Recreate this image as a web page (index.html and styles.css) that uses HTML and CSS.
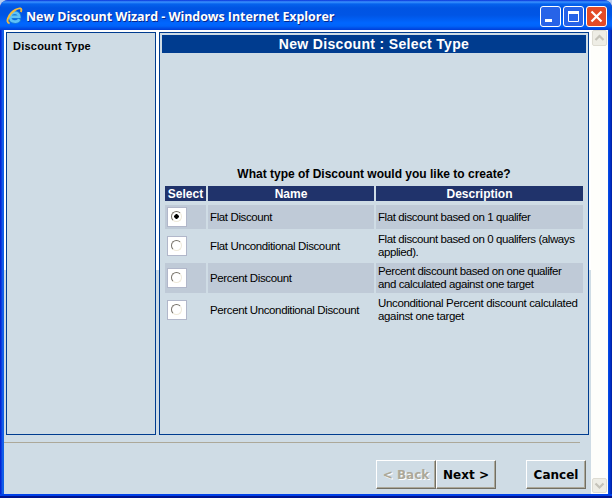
FILE: index.html
```html
<!DOCTYPE html>
<html lang="en">
<head>
<meta charset="utf-8">
<title>New Discount Wizard</title>
<link rel="stylesheet" href="styles.css">
</head>
<body>
<div class="window">
  <header class="titlebar">
    <svg class="logo" width="17" height="18" viewBox="0 0 17 18">
      <path d="M13.4 12.2C11.6 16 4.4 15.8 4.2 10.2C4.1 4.6 13.2 4.2 13.2 9.7H5" fill="none" stroke="#1b7fd6" stroke-width="4"/>
      <path d="M13.2 12.2C11.6 15.8 4.4 15.6 4.2 10.2C4.1 4.6 13.2 4.2 13.2 9.7H5" fill="none" stroke="#5fc2f8" stroke-width="2.6"/>
      <path d="M3.6 16.2C-1.4 15.6 3.2 6.4 9.3 2.9C13.6.4 16.8.8 14.8 5" fill="none" stroke="#f3bb3d" stroke-width="1.9"/>
    </svg>
    <h1 class="title">New Discount Wizard - Windows Internet Explorer</h1>
    <div class="controls">
      <svg width="21" height="21" viewBox="0 0 21 21"><rect class="ctl" x=".5" y=".5" width="20" height="20" rx="2.5"/><path d="M5 14.5h7" stroke="#fff" stroke-width="3"/></svg>
      <svg width="21" height="21" viewBox="0 0 21 21"><rect class="ctl" x=".5" y=".5" width="20" height="20" rx="2.5"/><path d="M5.5 6v9.5h10V6" fill="none" stroke="#fff"/><path d="M5 6.5h11" stroke="#fff" stroke-width="3"/></svg>
      <svg width="21" height="21" viewBox="0 0 21 21"><rect class="ctl close" x=".5" y=".5" width="20" height="20" rx="2.5"/><path d="M5.5 5.5l10 10M15.5 5.5l-10 10" stroke="#fff" stroke-width="2.2"/></svg>
    </div>
  </header>
  <div class="viewport">
    <main class="page">
      <div class="panels">
        <aside class="steps">Discount Type</aside>
        <section class="content">
          <h2 class="heading">New Discount : Select Type</h2>
          <p class="question">What type of Discount would you like to create?</p>
          <div class="grid">
            <div class="th">Select</div><div class="th">Name</div><div class="th">Description</div>
            <div class="gap"></div>
            <div class="td odd"><i class="box"><b class="radio on"></b></i></div><div class="td name odd">Flat Discount</div><div class="td odd">Flat discount based on 1 qualifer</div>
            <div class="td"><i class="box"><b class="radio"></b></i></div><div class="td name">Flat Unconditional Discount</div><div class="td"><p>Flat discount based on 0 qualifers (always<br>applied).</p></div>
            <div class="td odd"><i class="box"><b class="radio"></b></i></div><div class="td name odd">Percent Discount</div><div class="td odd"><p>Percent discount based on one qualifer<br>and calculated against one target</p></div>
            <div class="td"><i class="box"><b class="radio"></b></i></div><div class="td name">Percent Unconditional Discount</div><div class="td"><p class="wide">Unconditional Percent discount calculated<br>against one target</p></div>
          </div>
        </section>
      </div>
      <hr class="rule">
      <div class="buttons">
        <button class="btn" disabled>&lt; Back</button><button class="btn">Next &gt;</button><button class="btn cancel">Cancel</button>
      </div>
    </main>
    <div class="scrollbar">
      <svg width="15" height="17" viewBox="0 0 15 17"><rect class="arrow" x=".5" y=".5" width="14" height="15" rx="1.5"/><path d="M3.5 10l4-4 4 4" fill="none" stroke="#c5c3b9" stroke-width="2.2"/></svg>
      <svg width="15" height="17" viewBox="0 0 15 17"><rect class="arrow" x=".5" y="1.5" width="14" height="14" rx="1.5"/><path d="M3.5 6.5l4 4 4-4" fill="none" stroke="#c5c3b9" stroke-width="2.2"/></svg>
    </div>
  </div>
</div>
</body>
</html>
```
FILE: styles.css
```css
* { box-sizing: border-box; }
body { margin: 0; background: #b8cdf0; font-family: "Liberation Sans", Arial, sans-serif; }
h1, h2, p { margin: 0; }
.window { width: 612px; height: 498px; padding: 0 4px 4px; border-radius: 8px 8px 0 0; background: linear-gradient(90deg, #0019cf 0, #0831d9 1px, #166aee 3px, #0855dd 4px, #0855dd 608px, #0040e8 609px, #001ea0 612px); overflow: hidden; display: flex; flex-direction: column; box-shadow: inset 0 -2px #00138c, inset 0 -4px #0040e8; }
.titlebar { flex: none; height: 30px; margin: 0 -4px; padding: 0 5px 0 6px; display: flex; align-items: center; border-radius: 8px 8px 0 0; background: linear-gradient(#0831d9 0, #3a93ff 2px, #0562ed 4px, #0054e3 8px, #0055e5 15px, #0066ff 23px, #0064fa 26px, #003dd7 30px); }
.logo { flex: none; margin: 2px 3px 0 0; }
.title { flex: 1; font: bold 12.5px/20px "Open Sans", sans-serif; color: #fff; text-shadow: 1px 1px #07298d; white-space: nowrap; padding-top: 4px; letter-spacing: -.06px; }
.controls { display: flex; gap: 2px; padding-top: 3px; }
.ctl { fill: #2763e8; stroke: #fff; }
.close { fill: #e34b27; }
.viewport { flex: 1; display: flex; background: #cfdce5; }
.page { width: 587px; display: flex; flex-direction: column; }
.panels { height: 407px; padding: 2px 2px 2px; display: flex; gap: 3px; background: linear-gradient(#fff 240px, #cfdce5 240px); }
.steps, .content { height: 403px; border: 1px solid #003c8f; background: #cfdce5; }
.steps { width: 150px; padding: 6px; font-weight: bold; font-size: 11px; line-height: 15px; letter-spacing: .23px; }
.content { width: 430px; padding: 2px; }
.heading { height: 18px; background: #003c8f; color: #fff; font-size: 14px; line-height: 18px; text-align: center; letter-spacing: .33px; }
.question { margin-top: 113px; height: 20px; text-align: center; font-weight: bold; font-size: 12px; line-height: 17px; }
.grid { margin: 0 3px; display: grid; grid-template-columns: 41px 166px 207px; column-gap: 2px; grid-template-rows: 15px 4px 24px 34px 30px 34px; }
.gap { grid-column: 1 / -1; }
.th { background: #20336b; color: #fff; font-size: 12px; font-weight: bold; line-height: 16px; text-align: center; }
.td { display: flex; align-items: center; padding-left: 2px; font-size: 11.5px; line-height: 13px; letter-spacing: -.42px; white-space: nowrap; }
.name { letter-spacing: -.38px; }
.wide { letter-spacing: -.34px; }
.odd { background: #bfcad7; }
.box { width: 20px; height: 20px; border: 1px solid #b1b7ca; background: #fff; }
.radio { display: block; width: 11px; height: 11px; margin: 3px; border: 1px solid; border-color: #777269 #eee9d9 #eee9d9 #777269; border-radius: 50%; }
.on { background: radial-gradient(circle, #000 2px, #fff 2.5px); }
.rule { flex: none; width: 576px; height: 1px; margin: 5px 0 0; border: 0; background: #aca899; }
.buttons { margin-top: 17px; padding-left: 372px; display: flex; }
.btn { width: 60px; height: 29px; padding: 0; border: 1px solid; border-color: #fff #716f64 #716f64 #fff; box-shadow: inset -1px -1px #aca899; background: #cfdce5; color: #000; font: bold 12px "DejaVu Sans", sans-serif; }
.btn:disabled { color: #aca899; text-shadow: 1px 1px #fff; }
.cancel { margin-left: 30px; }
.scrollbar { width: 17px; padding: 0 1px; background: #fefefb; display: flex; flex-direction: column; justify-content: space-between; }
.arrow { fill: #eeede5; stroke: #dedcd2; }
```
